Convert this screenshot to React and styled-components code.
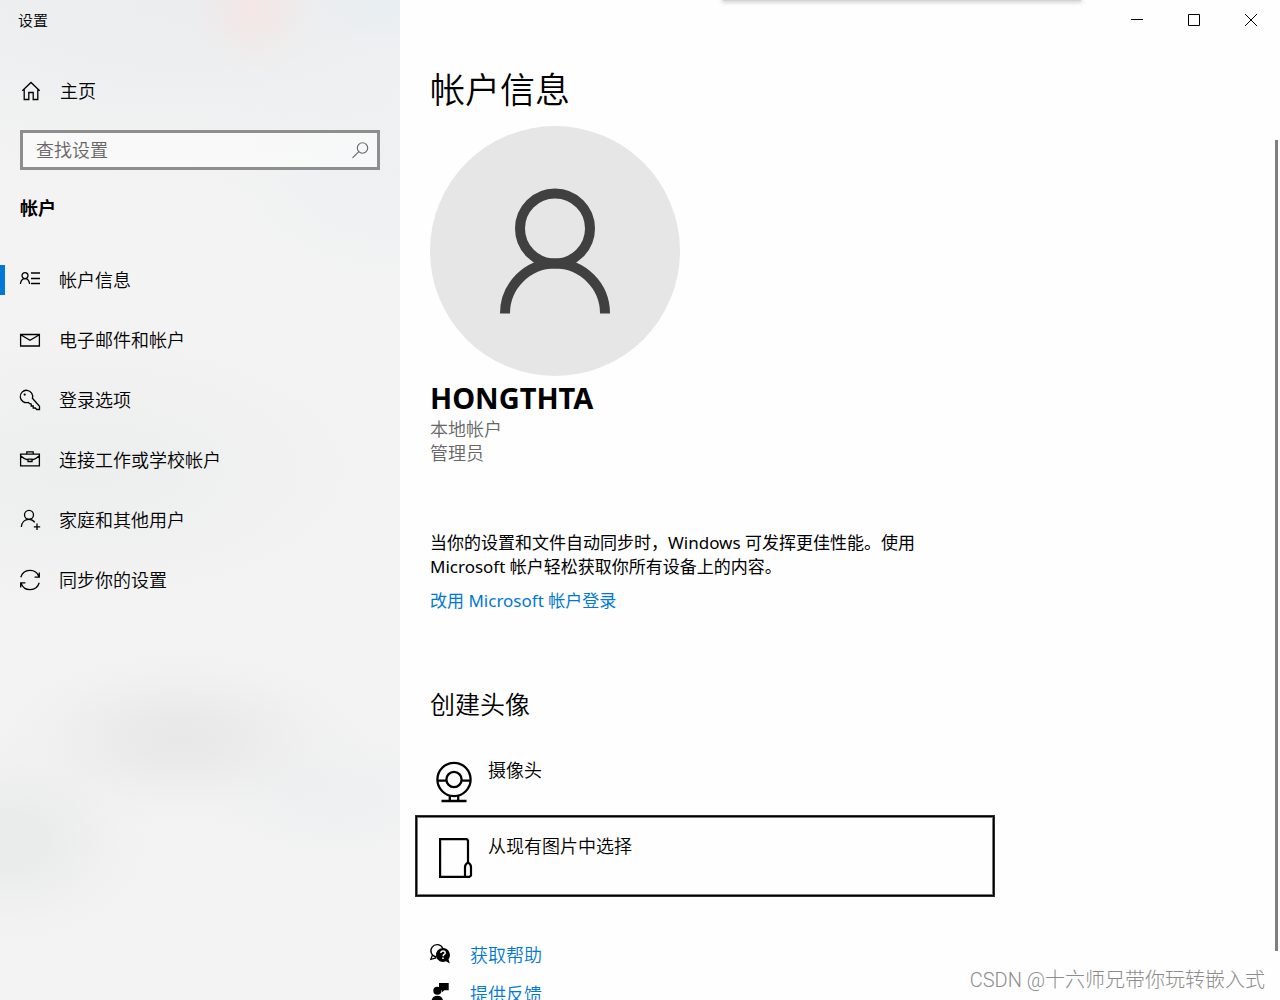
import React from 'react'
import styled, { createGlobalStyle, ThemeProvider } from 'styled-components'

const theme = {
  colors: {
    text: '#000',
    muted: '#666',
    accent: '#0078d7',
    border: '#8e8e8e',
    page: '#fefefe',
    avatar: '#e6e6e6',
    avatarInk: '#404040',
  },
  font: '"Noto Sans", "Noto Sans CJK SC", sans-serif',
  sizes: {
    caption: '15px',
    body: '18px',
    copy: '17px',
    subtitle: '25px',
    name: '29px',
    title: '35px',
  },
}

const GlobalStyle = createGlobalStyle`
  * {
    box-sizing: border-box;
  }
  body {
    margin: 0;
    overflow: hidden;
    font-family: ${theme.font};
    font-size: ${theme.sizes.body};
    font-weight: 350;
    line-height: 24px;
    color: ${theme.colors.text};
    background: ${theme.colors.page};
  }
  h1, h2, p, ul {
    margin: 0;
    padding: 0;
    font-weight: inherit;
  }
  ul {
    list-style: none;
  }
  button, input {
    font: inherit;
    color: inherit;
  }
  a {
    color: inherit;
    text-decoration: none;
  }
`

// soft patch of wallpaper showing through the sidebar
const blob = (size, position, rgb, alpha) => `radial-gradient(
  ellipse ${size} at ${position},
  rgba(${rgb}, ${alpha}) 0%,
  rgba(${rgb}, ${alpha * 0.85}) 25%,
  rgba(${rgb}, ${alpha * 0.5}) 50%,
  rgba(${rgb}, ${alpha * 0.15}) 75%,
  rgba(${rgb}, 0) 100%
)`

const Shell = styled.div`
  position: relative;
  display: grid;
  grid-template-columns: 400px 1fr;
  height: 100vh;
  overflow: hidden;
`

const Sidebar = styled.aside`
  display: flex;
  flex-direction: column;
  background:
    ${blob('70px 70px', '255px 8px', '245, 230, 228', 0.8)},
    ${blob('120px 60px', '400px 0', '230, 237, 242', 0.8)},
    ${blob('500px 200px', '180px 0', '234, 236, 238', 0.9)},
    ${blob('220px 140px', '400px 170px', '236, 239, 241', 0.7)},
    ${blob('340px 160px', '80px 470px', '236, 237, 237', 0.8)},
    ${blob('190px 90px', '180px 738px', '231, 231, 231', 0.9)},
    ${blob('150px 110px', '10px 840px', '232, 233, 233', 0.9)},
    ${blob('150px 75px', '335px 795px', '237, 239, 240', 0.9)},
    #f3f3f3;
`

const WindowTitle = styled.div`
  height: 40px;
  padding-left: 18px;
  font-size: ${({ theme }) => theme.sizes.caption};
  line-height: 40px;
`

const HomeLink = styled.a`
  display: flex;
  align-items: center;
  gap: 19px;
  height: 60px;
  margin-top: 21px;
  padding-left: 21px;
`

const SearchBox = styled.label`
  display: flex;
  align-items: center;
  height: 40px;
  margin: 9px 20px 0;
  padding: 0 7px 0 13px;
  border: 3px solid ${({ theme }) => theme.colors.border};
  background: rgba(255, 255, 255, 0.5);
  color: ${({ theme }) => theme.colors.muted};
`

const SearchInput = styled.input`
  flex: 1;
  min-width: 0;
  padding: 0;
  border: 0;
  outline: 0;
  background: transparent;
  &::placeholder {
    color: ${({ theme }) => theme.colors.muted};
    opacity: 1;
  }
`

const SectionLabel = styled.h2`
  margin: 26px 20px 30px;
  font-size: ${({ theme }) => theme.sizes.body};
  font-weight: 700;
`

const NavItem = styled.a`
  display: flex;
  align-items: center;
  gap: 19px;
  height: 60px;
  &::before {
    content: '';
    width: 5px;
    height: 30px;
    margin-right: -4px;
    background: ${({ theme, $active }) => ($active ? theme.colors.accent : 'transparent')};
  }
`

const Icon = styled.svg`
  display: block;
  flex: none;
  width: ${({ $size = 20 }) => $size}px;
  height: ${({ $size = 20 }) => $size}px;
  fill: none;
  stroke: currentColor;
  stroke-width: ${({ $stroke = 1.3 }) => $stroke};
  overflow: visible;
`

const Main = styled.main`
  display: flex;
  flex-direction: column;
  min-width: 0;
  overflow: hidden;
`

const TitleBar = styled.header`
  display: flex;
  justify-content: flex-end;
  flex: none;
  height: 40px;
  padding-right: 1px;
`

const WindowButton = styled.button`
  display: flex;
  align-items: center;
  justify-content: center;
  width: 57px;
  padding: 0;
  border: 0;
  background: transparent;
`

const TopShadow = styled.div`
  position: absolute;
  top: 0;
  right: 199px;
  width: 358px;
  height: 1px;
  background: #d2d2d2;
  box-shadow: 0 0 4px 1px rgba(0, 0, 0, 0.25);
`

const Content = styled.div`
  padding: 0 30px;
`

const PageTitle = styled.h1`
  margin-top: 25px;
  font-size: ${({ theme }) => theme.sizes.title};
  line-height: 50px;
`

const Avatar = styled.svg`
  display: block;
  width: 250px;
  height: 250px;
  margin-top: 11px;
  border-radius: 50%;
  background: ${({ theme }) => theme.colors.avatar};
  fill: none;
  stroke: ${({ theme }) => theme.colors.avatarInk};
  stroke-width: 10;
`

const UserName = styled.h2`
  margin-top: 3px;
  font-size: ${({ theme }) => theme.sizes.name};
  font-weight: 700;
  line-height: 38px;
`

const UserMeta = styled.p`
  color: ${({ theme }) => theme.colors.muted};
`

const Copy = styled.p`
  max-width: 500px;
  margin: 66px 0 10px;
  font-size: ${({ theme }) => theme.sizes.copy};
  font-weight: 400;
`

const TextLink = styled.a`
  display: block;
  width: fit-content;
  font-size: ${({ theme }) => theme.sizes.copy};
  font-weight: 400;
  color: ${({ theme }) => theme.colors.accent};
`

const Subtitle = styled.h2`
  margin: 73px 0 20px;
  font-size: ${({ theme }) => theme.sizes.subtitle};
  line-height: 36px;
`

const OptionList = styled.div`
  width: 574px;
  max-width: 100%;
  margin-left: -12px;
`

const Option = styled.button`
  display: flex;
  align-items: flex-start;
  gap: 14px;
  width: 100%;
  height: 76px;
  padding: 16px 16px 0;
  border: 0;
  background: transparent;
  text-align: left;
  ${({ $focused }) => $focused && `
    box-shadow: 0 0 0 1px #777, 0 0 0 2px #000, 0 0 0 3px #2b2b2b;
  `}
  ${Icon} {
    margin-top: 4px;
  }
`

const SupportLinks = styled.ul`
  margin-top: 41px;
`

const SupportLink = styled.a`
  display: flex;
  align-items: center;
  gap: 20px;
  height: 39px;
  color: ${({ theme }) => theme.colors.accent};
  ${Icon} {
    margin-bottom: 2px;
    color: ${({ theme }) => theme.colors.text};
  }
`

const ScrollThumb = styled.div`
  position: absolute;
  top: 140px;
  bottom: 49px;
  right: 2px;
  width: 3px;
  background: #7f7f7f;
`

const Watermark = styled.div`
  position: absolute;
  right: 15px;
  bottom: 6px;
  font-family: Roboto, "Noto Sans CJK SC", sans-serif;
  font-size: 20px;
  font-weight: 300;
  line-height: 28px;
  color: #8c8c8c;
`

const icons = {
  home: (
    <path d="M1.3 9.8 10 1.5l8.7 8.3M3.2 8.2v10.3h4.6v-7h4.4v7h4.6V8.2" />
  ),
  card: (
    <>
      <circle cx="5" cy="5.6" r="3" />
      <path d="M.4 14c.4-3 2.2-5.3 4.6-5.3s4.2 2.3 4.6 5.3M11 3h9M11 8.5h9M11 13.5h9" />
    </>
  ),
  mail: (
    <path d="M.6 4.5h18.8V16H.6zM.6 4.8 10 10.2l9.4-5.4" />
  ),
  key: (
    <>
      <path d="M12.4 8.3A6.2 6.2 0 1 0 8.3 12.4l1.500 1.300 1.400.3v2h2v2h2l1.600 1.500h2.700v-3.200z" />
      <circle cx="4.7" cy="4.6" r="1.1" fill="currentColor" stroke="none" />
    </>
  ),
  briefcase: (
    <path d="M.6 4.2h18.8v11.6H.6zM6.800 4.200V1.900h6.400v2.300M.6 5.800c2 2 4.400 3.500 7.400 4.200M19.400 5.800c-2 2-4.400 3.500-7.400 4.200M8 9.200h4v2.300H8z" />
  ),
  family: (
    <>
      <circle cx="9" cy="4.8" r="4.5" />
      <path d="M1.3 17c.4-4.5 3.4-7.700 7.700-7.700 2.400 0 4.400 1.200 5.700 3M17 13.500v6.500M13.800 16.800h6.400" />
    </>
  ),
  sync: (
    <path d="M.8 7.3A9.5 9.5 0 0 1 18.900 6.800M19.300 2.500v4.600h-4.700M19.200 12.700A9.500 9.500 0 0 1 1.100 13.200M.7 17.500v-4.600h4.700" />
  ),
  help: (
    <>
      <path d="M6.3 13A6.2 6.2 0 1 1 12.800 4.400M2.400 11 .8 15.300l5.400-1.500" />
      <path d="M13 4a7 7 0 1 0 2.900 13.300l3.900 2.200-1.300-4.300A7 7 0 0 0 13 4z" fill="currentColor" stroke="none" />
      <path d="M10.900 9.100c0-2.800 4.300-2.600 4.300-.2 0 1.600-2.100 1.500-2.100 3.300M13 13.600v1.500" stroke="#fff" strokeWidth="1.5" />
    </>
  ),
  feedback: (
    <g fill="currentColor" stroke="none">
      <path d="M9 0h9.700v7.200h-4.400L11.800 9.500V7.200H9z" />
      <circle cx="7.3" cy="7.8" r="4" />
      <path d="M1.500 18.500c0-3.700 2.500-5.700 5.800-5.700s5.800 2 5.800 5.700z" />
    </g>
  ),
}

const NAV = [
  { icon: 'card', label: '帐户信息', active: true },
  { icon: 'mail', label: '电子邮件和帐户' },
  { icon: 'key', label: '登录选项' },
  { icon: 'briefcase', label: '连接工作或学校帐户' },
  { icon: 'family', label: '家庭和其他用户' },
  { icon: 'sync', label: '同步你的设置' },
]

const SUPPORT = [
  { icon: 'help', label: '获取帮助' },
  { icon: 'feedback', label: '提供反馈' },
]

const Glyph = ({ name }) => (
  <Icon viewBox="0 0 20 20" aria-hidden="true">{icons[name]}</Icon>
)

const App = () => (
  <ThemeProvider theme={theme}>
    <GlobalStyle />
    <Shell>
      <Sidebar>
        <WindowTitle>设置</WindowTitle>
        <HomeLink href="#home">
          <Glyph name="home" />
          主页
        </HomeLink>
        <SearchBox>
          <SearchInput type="text" placeholder="查找设置" aria-label="查找设置" />
          <Icon viewBox="0 0 20 20" $stroke={1.1} aria-hidden="true">
            <circle cx="12.5" cy="8" r="5.2" />
            <path d="M8.8 11.7 2.5 17.8" />
          </Icon>
        </SearchBox>
        <SectionLabel>帐户</SectionLabel>
        <nav>
          {NAV.map(({ icon, label, active }) => (
            <NavItem key={icon} href={`#${icon}`} $active={active}>
              <Glyph name={icon} />
              {label}
            </NavItem>
          ))}
        </nav>
      </Sidebar>

      <Main>
        <TitleBar>
          <WindowButton aria-label="最小化">
            <Icon viewBox="0 0 12 12" $size={12} $stroke={1}><path d="M0 5.5h12" /></Icon>
          </WindowButton>
          <WindowButton aria-label="最大化">
            <Icon viewBox="0 0 12 12" $size={12} $stroke={1}><path d="M.5.5h11v11H.5z" /></Icon>
          </WindowButton>
          <WindowButton aria-label="关闭">
            <Icon viewBox="0 0 12 12" $size={12} $stroke={1}><path d="m0 0 12 12M12 0 0 12" /></Icon>
          </WindowButton>
        </TitleBar>
        <Content>
          <PageTitle>帐户信息</PageTitle>
          <Avatar viewBox="0 0 250 250" aria-hidden="true">
            <circle cx="125" cy="102.5" r="35" />
            <path d="M75 187.5a50 50 0 0 1 100 0" />
          </Avatar>
          <UserName>HONGTHTA</UserName>
          <UserMeta>本地帐户</UserMeta>
          <UserMeta>管理员</UserMeta>

          <Copy>当你的设置和文件自动同步时，Windows 可发挥更佳性能。使用 Microsoft 帐户轻松获取你所有设备上的内容。</Copy>
          <TextLink href="#microsoft">改用 Microsoft 帐户登录</TextLink>

          <Subtitle>创建头像</Subtitle>
          <OptionList>
            <Option>
              <Icon viewBox="0 0 40 40" $size={40} $stroke={2.3} aria-hidden="true">
                <circle cx="20" cy="17.5" r="16.6" />
                <circle cx="20" cy="17.5" r="7.6" />
                <path d="M3.4 18.7h9M27.6 18.7h9M15.8 33.5V39M24.2 33.5V39M7.5 39h25" />
              </Icon>
              摄像头
            </Option>
            <Option $focused>
              <Icon viewBox="0 0 40 40" $size={40} $stroke={2.2} aria-hidden="true">
                <path d="M34 24V2.5L32.7 1.1H6.1v37.800h29.300L37 37.500V29c0-2-1-3.400-3-4.700-2 1.300-3 2.700-3 4.700v9.800" />
              </Icon>
              从现有图片中选择
            </Option>
          </OptionList>

          <SupportLinks>
            {SUPPORT.map(({ icon, label }) => (
              <li key={icon}>
                <SupportLink href={`#${icon}`}>
                  <Glyph name={icon} />
                  {label}
                </SupportLink>
              </li>
            ))}
          </SupportLinks>
        </Content>
      </Main>

      <TopShadow />
      <ScrollThumb />
      <Watermark>CSDN @十六师兄带你玩转嵌入式</Watermark>
    </Shell>
  </ThemeProvider>
)

export default App
